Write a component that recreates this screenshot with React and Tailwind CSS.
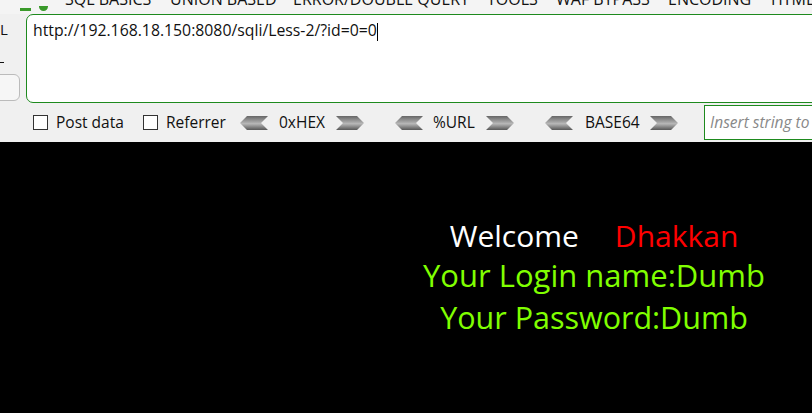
const menu = [
  { label: "SQL BASICS", w: "w-[105px]" },
  { label: "UNION BASED", w: "w-[123px]" },
  { label: "ERROR/DOUBLE QUERY", w: "w-[194px]" },
  { label: "TOOLS", w: "w-[69px]" },
  { label: "WAF BYPASS", w: "w-[112px]" },
  { label: "ENCODING", w: "w-[103px]" },
  { label: "HTML", w: "w-[60px]" },
];

const ArrowLeft = () => (
  <svg width="28" height="14" viewBox="0 0 28 14" className="shrink-0">
    <defs>
      <linearGradient id="ag" x1="0" y1="0" x2="0" y2="1">
        <stop offset="0" stopColor="#666" />
        <stop offset="0.45" stopColor="#a8a8a8" />
        <stop offset="0.55" stopColor="#b8b8b8" />
        <stop offset="1" stopColor="#585858" />
      </linearGradient>
    </defs>
    <polygon points="0,7 7,0 28,0 21,7 28,14 7,14" fill="url(#ag)" />
  </svg>
);

const ArrowRight = () => (
  <svg width="28" height="14" viewBox="0 0 28 14" className="shrink-0">
    <polygon points="0,0 21,0 28,7 21,14 0,14 7,7" fill="url(#ag)" />
  </svg>
);

const Check = ({ label, w }) => (
  <label className={`flex items-center gap-[8px] shrink-0 ${w}`}>
    <span className="w-[15px] h-[15px] border border-[#333] bg-white shrink-0" />
    <span>{label}</span>
  </label>
);

const Encoder = ({ label, pad, w, after }) => (
  <div className={`flex items-center shrink-0 ${after}`}>
    <ArrowLeft />
    <span className={`${pad} ${w}`}>{label}</span>
    <ArrowRight />
  </div>
);

export default function App() {
  return (
    <div
      className="w-[812px] h-[413px] overflow-hidden bg-black text-[#111]"
      style={{ fontFamily: '"Open Sans", "Noto Sans", sans-serif' }}
    >
      <div className="bg-[#f0f0f0]">
        {/* menu strip, cut off at the top */}
        <div className="h-[14px] bg-[#f4f4f4] relative overflow-hidden">
          <div className="flex items-end absolute left-0 bottom-[7px] whitespace-nowrap text-[16px] leading-[16px]">
            <span className="ml-[20px] w-[45px] flex gap-[8px] items-end">
              <span className="w-[11px] h-[3px] bg-[#3a9a2a] translate-y-[4px]" />
              <span className="w-[9px] h-[5px] bg-[#3a9a2a] rounded-b-full translate-y-[4px]" />
            </span>
            {menu.map((m) => (
              <span key={m.label} className={`${m.w} shrink-0`}>
                {m.label}
              </span>
            ))}
          </div>
        </div>

        <div className="flex">
          <div className="w-[26px] shrink-0 relative text-[15px]">
            <div className="absolute left-0 top-[4px]">L</div>
            <div className="absolute left-0 top-[48px] w-[4px] h-[1px] bg-[#111]" />
            <div className="absolute left-[-20px] top-[60px] w-[40px] h-[27px] border border-[#bbb] rounded-[6px] bg-[#f6f6f6]" />
          </div>
          <div className="w-[820px] h-[89px] shrink-0 bg-white border border-[#1e8a1e] rounded-[7px] px-[6px] pt-[4px] text-[15.8px]">
            <span>http://192.168.18.150:8080/sqli/Less-2/?id=0=0</span>
            <span className="inline-block w-[1px] h-[18px] bg-black align-middle" />
          </div>
        </div>

        <div className="h-[39px] flex items-center whitespace-nowrap pl-[33px] text-[15.5px]">
          <Check label="Post data" w="w-[110px]" />
          <Check label="Referrer" w="w-[97px]" />
          <Encoder label="0xHEX" pad="pl-[11px]" w="w-[68px]" after="mr-[31px]" />
          <Encoder label="%URL" pad="pl-[10px]" w="w-[63px]" after="mr-[31px]" />
          <Encoder label="BASE64" pad="pl-[12px]" w="w-[77px]" after="mr-[26px]" />
          <div className="w-[200px] h-[35px] shrink-0 bg-white border border-[#1e8a1e] flex items-center px-[5px] italic text-[#888]">
            Insert string to convert
          </div>
        </div>
      </div>

      <div className="w-[1188px] flex flex-col items-center pt-[74px] text-[31px]">
        <div className="text-white leading-[40px] text-[30px]">
          Welcome<span className="ml-[36px] text-[#ff0000]">Dhakkan</span>
        </div>
        <div className="text-[#80ff00] leading-[38px]">Your Login name:Dumb</div>
        <div className="text-[#80ff00] leading-[40px] mt-[3px] text-[30.5px]">Your Password:Dumb</div>
      </div>
    </div>
  );
}
